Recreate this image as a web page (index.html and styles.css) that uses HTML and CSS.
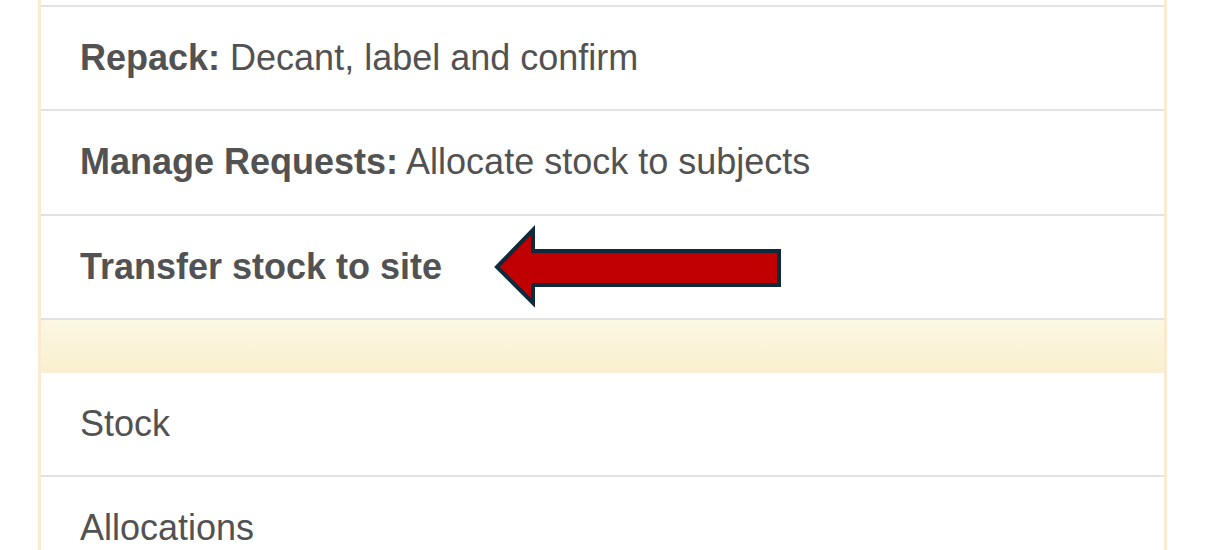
FILE: index.html
```html
<!DOCTYPE html>
<html>
<head>
<meta charset="utf-8">
<link rel="stylesheet" href="styles.css">
</head>
<body>
<div class="panel">
  <div class="row"><span class="b">Repack:</span> Decant, label and confirm</div>
  <div class="row"><span class="b">Manage Requests:</span> Allocate stock to subjects</div>
  <div class="row"><span class="b">Transfer stock to site</span></div>
  <div class="band"></div>
  <div class="row first-plain">Stock</div>
  <div class="row">Allocations</div>
  <svg class="arrow" width="300" height="90" viewBox="0 0 300 90">
    <polygon points="3,43 39,6 39,27 285,27 285,61 39,61 39,79" fill="#c00000" stroke="#0e2a3b" stroke-width="4" stroke-linejoin="miter"/>
  </svg>
</div>
</body>
</html>
```
FILE: styles.css
```css
html, body {
  margin: 0;
  padding: 0;
  background: #ffffff;
}
body {
  font-family: "Liberation Sans", Arial, sans-serif;
  color: #525252;
  overflow: hidden;
  height: 550px;
}
.panel {
  position: relative;
  box-sizing: border-box;
  margin-left: 38px;
  width: 1129px;
  height: 550px;
  padding-top: 5px;
  border-left: 3px solid #f9ead0;
  border-right: 3px solid #f9ead0;
  overflow: hidden;
}
.row {
  box-sizing: border-box;
  height: 104.4px;
  border-top: 2px solid #e2e2e2;
  padding-left: 39px;
  font-size: 36px;
  line-height: 102px;
  white-space: nowrap;
}
.b {
  font-weight: bold;
}
.band {
  box-sizing: border-box;
  height: 54px;
  border-top: 2px solid #e2e2e2;
  background: linear-gradient(#fcf7e2, #faf0cf);
}
.first-plain {
  height: 103px;
  border-top: 1px solid #f7efd6;
}
.arrow {
  position: absolute;
  left: 453px;
  top: 224px;
}
```
